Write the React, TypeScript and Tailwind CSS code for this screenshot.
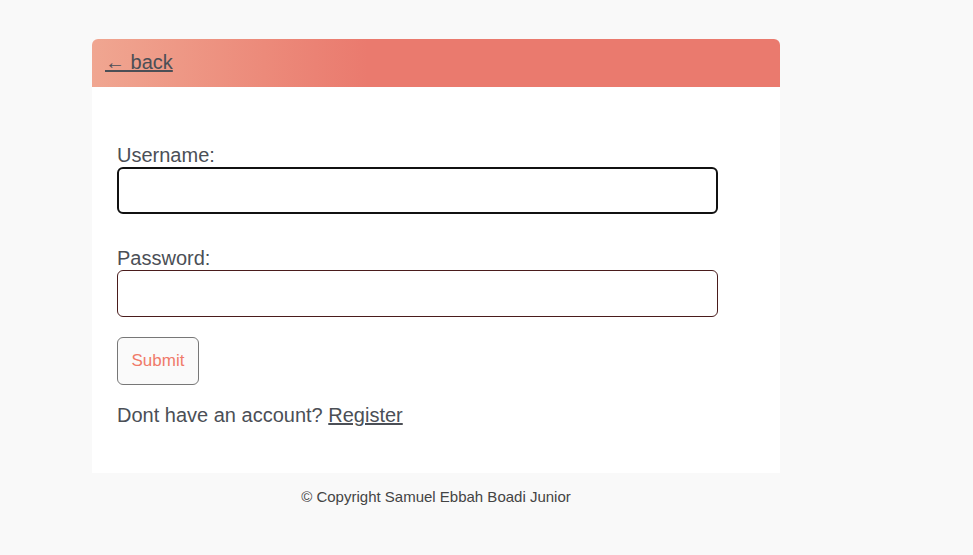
const App = () => {
  return (
    <div className="min-h-screen bg-[#f9f9f9] font-['Liberation_Sans',Arial,sans-serif] text-[#4b4f56]">
      <div className="pt-[39px] pl-[92px]">
        <div className="w-[688px]">
          <div className="h-[48px] rounded-t-[6px] bg-[linear-gradient(to_right,#f0a691_0%,#ec8a7a_25%,#ea7a6e_40%,#ea7a6e_100%)] flex items-center pl-[13px]">
            <a href="#" className="text-[20px] underline text-[#4b4f56] leading-none mt-[-2px]">
              ← back
            </a>
          </div>
          <div className="bg-white pt-[57px] pb-[46px] pl-[25px]">
            <form className="flex flex-col" onSubmit={(e) => e.preventDefault()}>
              <label className="text-[20px] leading-[23px]">Username:</label>
              <input
                type="text"
                className="w-[601px] h-[47px] border-2 border-[#111] rounded-[6px] bg-white outline-none"
              />
              <label className="text-[20px] leading-[23px] mt-[33px]">Password:</label>
              <input
                type="password"
                className="w-[601px] h-[47px] border border-[#4a1c1c] rounded-[6px] bg-white outline-none"
              />
              <button
                type="submit"
                className="mt-[20px] w-[82px] h-[48px] border border-[#777] rounded-[6px] bg-[#fafafa] text-[#f07a6a] text-[17px]"
              >
                Submit
              </button>
              <p className="mt-[19px] text-[20px] leading-[23px]">
                Dont have an account?{" "}
                <a href="#" className="underline">
                  Register
                </a>
              </p>
            </form>
          </div>
          <p className="text-center text-[15px] leading-[18px] mt-[15px] text-[#444]">
            © Copyright Samuel Ebbah Boadi Junior
          </p>
        </div>
      </div>
    </div>
  );
};

export default App;
